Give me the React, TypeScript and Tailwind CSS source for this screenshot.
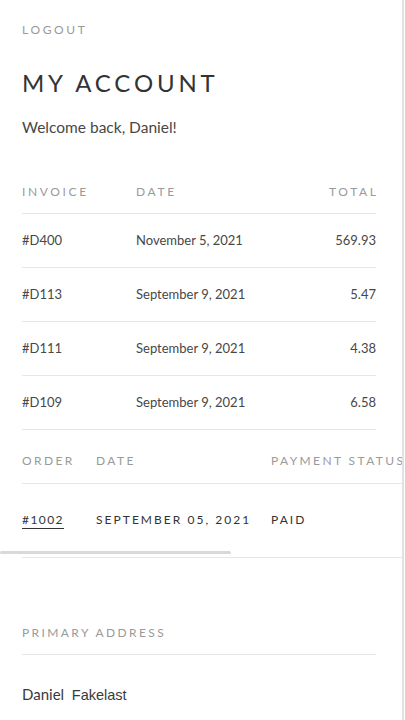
import React from "react";

const invoices = [
  { id: "#D400", date: "November 5, 2021", total: "569.93" },
  { id: "#D113", date: "September 9, 2021", total: "5.47" },
  { id: "#D111", date: "September 9, 2021", total: "4.38" },
  { id: "#D109", date: "September 9, 2021", total: "6.58" },
];

export default function App() {
  return (
    <div className="min-h-[720px] w-[405px] bg-white">
      <div
        className="min-h-[720px] w-[404px] border-r-2 border-[#e2e2e2] bg-white text-[#3a3a3a]"
        style={{ fontFamily: "Lato, 'Liberation Sans', sans-serif" }}
      >
        <div className="px-[22px]">
          <div className="pt-[22px] text-[12px] leading-[16px] tracking-[0.22em] text-[#9a9a9a]">LOGOUT</div>
          <h1 className="mt-[30px] text-[24px] leading-[30px] tracking-[0.16em] text-[#333]">MY ACCOUNT</h1>
          <p className="mt-[19px] text-[15.5px] leading-[20px] text-[#474747]">Welcome back, Daniel!</p>

          <div className="mt-[47px] w-[354px]">
            <div className="flex border-b border-[#e6e6e6] pb-[13px] text-[12px] leading-[16px] tracking-[0.22em] text-[#9a9a9a]">
              <div className="w-[114px]">INVOICE</div>
              <div className="flex-1">DATE</div>
              <div className="-mr-[0.22em] text-right">TOTAL</div>
            </div>
            {invoices.map((r) => (
              <div key={r.id} className="flex h-[54px] items-center border-b border-[#e6e6e6] text-[13px] text-[#474747]">
                <div className="w-[114px]">{r.id}</div>
                <div className="flex-1">{r.date}</div>
                <div className="text-right">{r.total}</div>
              </div>
            ))}
          </div>
        </div>

        <div className="relative mt-[23px] w-[402px] overflow-hidden">
          <div className="ml-[22px] w-[420px]">
            <div className="flex border-b border-[#e6e6e6] pb-[14px] text-[12px] leading-[16px] tracking-[0.2em] text-[#9a9a9a]">
              <div className="w-[74px]">ORDER</div>
              <div className="w-[175px]">DATE</div>
              <div className="whitespace-nowrap">PAYMENT STATUS</div>
            </div>
            <div className="flex h-[74px] items-start border-b border-[#e6e6e6] pt-[28px] text-[12px] font-normal leading-[16px] tracking-[0.17em] text-[#333]">
              <div className="w-[74px]">
                <span className="border-b-[1.5px] border-[#333] pb-[1px] tracking-[0.12em]">#1002</span>
              </div>
              <div className="w-[175px] whitespace-nowrap">SEPTEMBER 05, 2021</div>
              <div>PAID</div>
            </div>
          </div>
          <div className="absolute bottom-[4px] left-0 h-[3px] w-[231px] rounded-full bg-[#d9d9d9]" />
        </div>

        <div className="px-[22px]">
          <div className="mt-[67px] w-[354px] border-b border-[#e6e6e6] pb-[13px] text-[12px] leading-[16px] tracking-[0.2em] text-[#9a9a9a]">
            PRIMARY ADDRESS
          </div>
          <p className="mt-[29px] text-[15px] leading-[20px] text-[#3a3a3a]">
            Daniel{"\u00a0\u00a0"}
            <span style={{ fontFamily: "'Liberation Sans', Arial, sans-serif" }} className="text-[14.5px]">Fakelast</span>
          </p>
        </div>
      </div>
    </div>
  );
}
